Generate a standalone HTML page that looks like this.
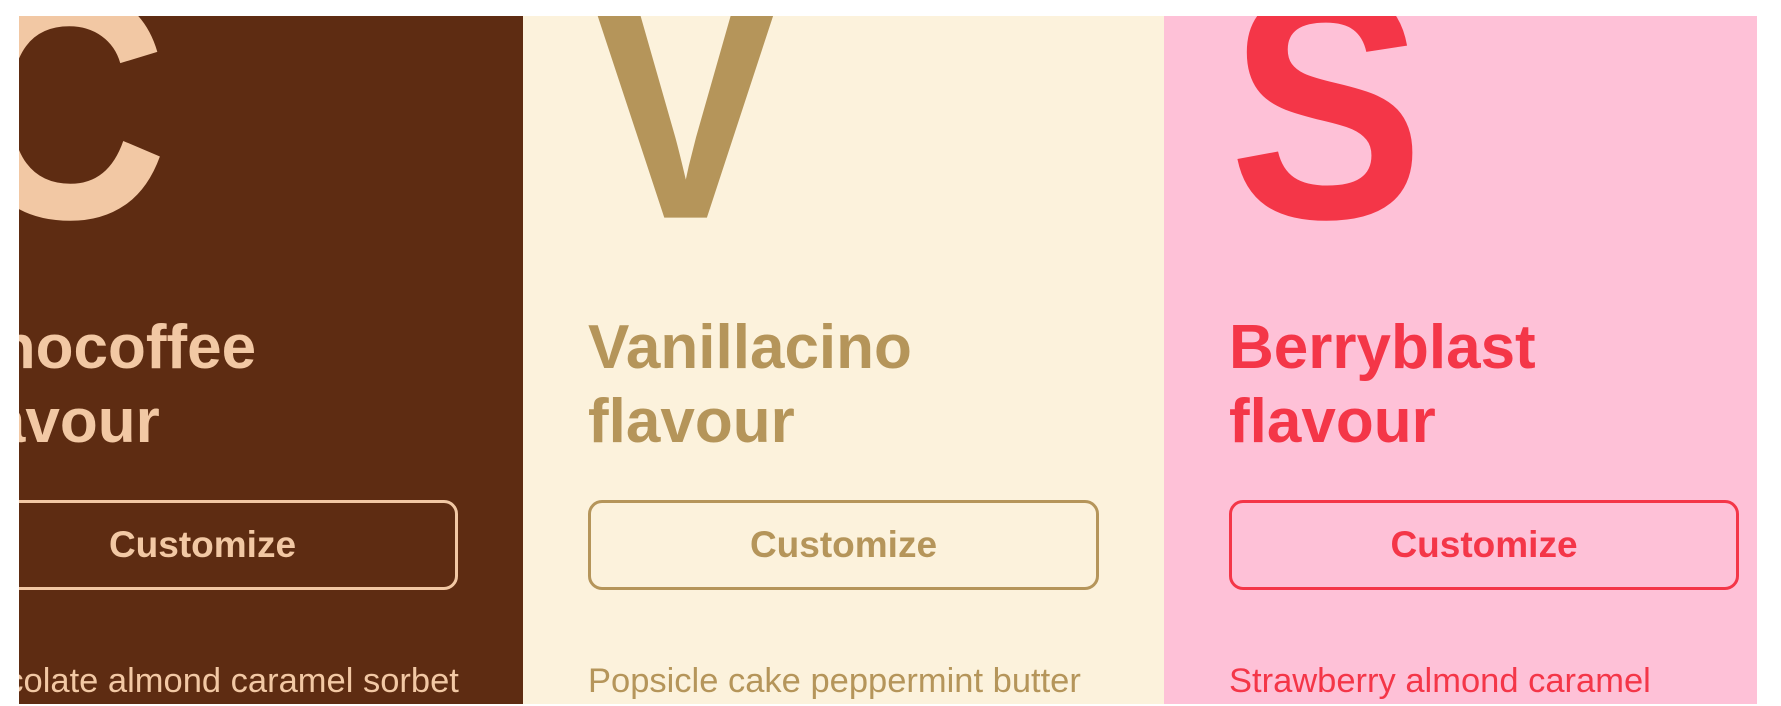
<!DOCTYPE html>
<html><head><meta charset="utf-8"><style>
html,body{margin:0;padding:0;background:#fff;width:1781px;height:706px;overflow:hidden;font-family:"Liberation Sans",sans-serif}
.p{position:absolute;top:16px;height:688px;overflow:hidden}
.in{position:absolute;top:0;left:0;width:520px;height:688px}
.big{position:absolute;left:0;top:-40px;font-size:292px;line-height:1;font-weight:bold;margin:0;transform:scaleY(1.12);transform-origin:0 100%}
.t{position:absolute;left:0;top:295px;font-size:62px;line-height:74px;font-weight:bold;margin:0;white-space:nowrap}
.b{position:absolute;left:0;top:484px;width:511px;height:90px;box-sizing:border-box;border:3px solid;border-radius:14px;display:flex;align-items:center;justify-content:center;font-size:37px;font-weight:bold}
.d{position:absolute;left:0;top:645px;font-size:34.5px;line-height:40px;white-space:nowrap;margin:0}
</style></head><body>
<div class="p" style="left:19px;width:504px;background:#5e2c12;color:#f2c8a4">
 <div class="in" style="left:-72px">
  <div class="big" style="left:10px">C</div>
  <div class="t" style="left:6px">Chocoffee<br>flavour</div>
  <div class="b" style="border-color:#f2c8a4">Customize</div>
  <div class="d" style="left:-4px">Chocolate almond caramel sorbet</div>
 </div>
</div>
<div class="p" style="left:523px;width:641px;background:#fcf2dc;color:#b5955a">
 <div class="in" style="left:65px">
  <div class="big">V</div>
  <div class="t">Vanillacino<br>flavour</div>
  <div class="b" style="border-color:#b5955a">Customize</div>
  <div class="d">Popsicle cake peppermint butter</div>
 </div>
</div>
<div class="p" style="left:1164px;width:593px;background:#fec1d7;color:#f43648">
 <div class="in" style="left:65px">
  <div class="big">S</div>
  <div class="t">Berryblast<br>flavour</div>
  <div class="b" style="border-color:#f43648;width:510px">Customize</div>
  <div class="d">Strawberry almond caramel</div>
 </div>
</div>
</body></html>
